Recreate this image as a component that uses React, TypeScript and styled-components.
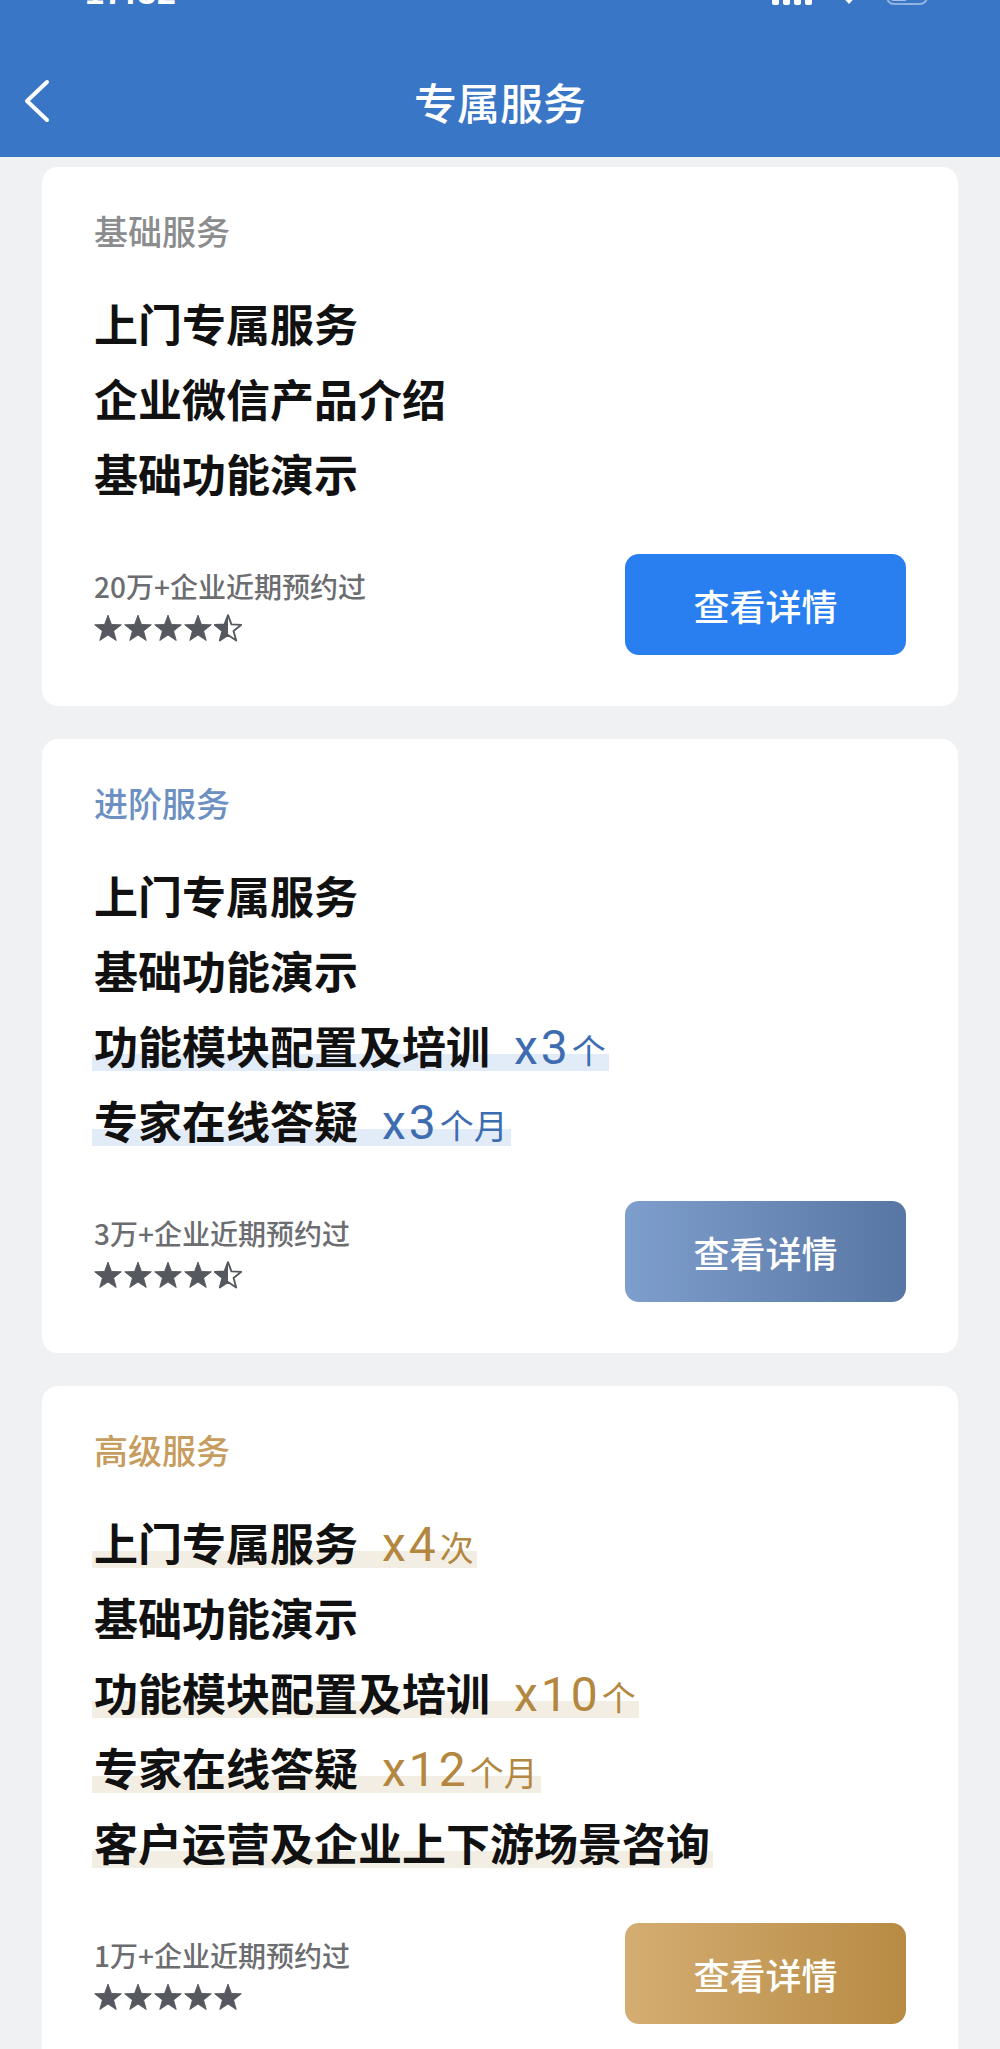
import React, { useId } from "react";
import styled, { createGlobalStyle } from "styled-components";

const GlobalStyle = createGlobalStyle`
  html, body { margin: 0; padding: 0; background: #f0f1f3; }
  body {
    font-family: "Noto Sans CJK SC", "Noto Sans", sans-serif;
    -webkit-font-smoothing: antialiased;
  }
  * { box-sizing: border-box; }
`;

type Tier = "basic" | "advanced" | "premium";

const palette: Record<Tier, { title: string; suffix: string; band: string; button: string }> = {
  basic: { title: "#8b8c8e", suffix: "#3d6db3", band: "", button: "#2a7ff0" },
  advanced: {
    title: "#6d90c2",
    suffix: "#3e6cb0",
    band: "#e2ebf8",
    button: "linear-gradient(90deg, #7e9ecd 0%, #5876a3 100%)",
  },
  premium: {
    title: "#c79d5f",
    suffix: "#b3873f",
    band: "#f3eee4",
    button: "linear-gradient(90deg, #d4ad72 0%, #b88b44 100%)",
  },
};

const Page = styled.div`
  min-height: 2049px;
  background: #f0f1f3;
`;

const Header = styled.header`
  background: #3a76c6;
  height: 157px;
  display: flex;
  flex-direction: column;
`;

const StatusBar = styled.div`
  height: 57px;
  overflow: hidden;
  display: flex;
  justify-content: space-between;
  align-items: flex-start;
  padding: 0 68px 0 85px;
  color: #fff;
`;

const StatusTime = styled.span`
  font-family: "Liberation Sans", Arial, sans-serif;
  font-weight: 700;
  font-size: 34px;
  line-height: 34px;
  margin-top: -25px;
  letter-spacing: 1px;
`;

const StatusIcons = styled.div`
  display: flex;
  align-items: flex-end;
  gap: 20px;
  margin-top: -23px;
  height: 28px;
`;

const NavBar = styled.div`
  height: 88px;
  display: grid;
  grid-template-columns: 1fr auto 1fr;
  align-items: center;
`;

const BackButton = styled.button`
  justify-self: start;
  margin-left: 22px;
  background: none;
  border: none;
  padding: 0;
  display: flex;
  cursor: pointer;
`;

const NavTitle = styled.h1`
  margin: 0;
  color: #fff;
  font-size: 43px;
  font-weight: 500;
  line-height: 60px;
`;

const Main = styled.main`
  display: flex;
  flex-direction: column;
  gap: 33px;
  padding: 10px 42px 0;
`;

const Card = styled.section`
  background: #fff;
  border-radius: 16px;
  padding: 44px 52px 51px;
  display: flex;
  flex-direction: column;
`;

const TierTitle = styled.h2<{ $tier: Tier }>`
  margin: 0;
  font-size: 34px;
  line-height: 40px;
  font-weight: 500;
  color: ${(p) => palette[p.$tier].title};
`;

const ItemList = styled.div`
  margin-top: 46px;
  display: flex;
  flex-direction: column;
  align-items: flex-start;
  gap: 23px;
`;

const Item = styled.div<{ $band: string }>`
  display: inline-flex;
  align-items: baseline;
  height: 52px;
  line-height: 52px;
  font-size: 44px;
  font-weight: 600;
  color: #111;
  margin-left: -2px;
  padding: 0 3px 0 2px;
  white-space: nowrap;
  background: ${(p) =>
    p.$band ? `linear-gradient(to bottom, transparent 67%, ${p.$band} 67%)` : "none"};
`;

const Suffix = styled.span<{ $tier: Tier }>`
  margin-left: 24px;
  color: ${(p) => palette[p.$tier].suffix};
  font-weight: 400;
  display: inline-flex;
  align-items: baseline;
`;

const SuffixCount = styled.span`
  font-family: Roboto, "Liberation Sans", sans-serif;
  font-size: 48px;
  letter-spacing: 3px;
`;

const SuffixUnit = styled.span`
  font-size: 34px;
  margin-left: 1px;
`;

const Footer = styled.div`
  margin-top: 55px;
  display: flex;
  justify-content: space-between;
  align-items: flex-start;
`;

const Meta = styled.div`
  padding-top: 14px;
  display: flex;
  flex-direction: column;
  gap: 10px;
`;

const Booked = styled.span`
  font-size: 28px;
  line-height: 36px;
  font-weight: 500;
  color: #6c6d70;
`;

const Stars = styled.div`
  display: flex;
  gap: 2px;
  height: 28px;
  align-items: center;
`;

const DetailButton = styled.button<{ $tier: Tier }>`
  width: 281px;
  height: 101px;
  border: none;
  border-radius: 14px;
  background: ${(p) => palette[p.$tier].button};
  color: #fff;
  font-family: "Noto Sans CJK SC", sans-serif;
  font-size: 36px;
  font-weight: 500;
  cursor: pointer;
  display: flex;
  align-items: center;
  justify-content: center;
`;

const STAR_PATH =
  "M12 1 L14.94 8.95 L23.41 9.29 L16.76 14.55 L19.05 22.71 L12 18 L4.95 22.71 L7.24 14.55 L0.59 9.29 L9.06 8.95 Z";

const STAR_COLOR = "#55585e";

function Star({ half }: { half?: boolean }) {
  const id = useId().replace(/:/g, "");
  return (
    <svg width="28" height="28" viewBox="0 0 24 24">
      {half ? (
        <>
          <defs>
            <clipPath id={`l${id}`}>
              <rect x="0" y="0" width="12" height="24" />
            </clipPath>
          </defs>
          <path d={STAR_PATH} fill="none" stroke={STAR_COLOR} strokeWidth="1.6" strokeLinejoin="round" />
          <path d={STAR_PATH} fill={STAR_COLOR} clipPath={`url(#l${id})`} />
        </>
      ) : (
        <path d={STAR_PATH} fill={STAR_COLOR} stroke={STAR_COLOR} strokeWidth="0.8" strokeLinejoin="round" />
      )}
    </svg>
  );
}

type ItemData = { text: string; count?: string; unit?: string };

type CardData = {
  tier: Tier;
  title: string;
  items: ItemData[];
  booked: string;
  halfStar: boolean;
};

const cards: CardData[] = [
  {
    tier: "basic",
    title: "基础服务",
    items: [{ text: "上门专属服务" }, { text: "企业微信产品介绍" }, { text: "基础功能演示" }],
    booked: "20万+企业近期预约过",
    halfStar: true,
  },
  {
    tier: "advanced",
    title: "进阶服务",
    items: [
      { text: "上门专属服务" },
      { text: "基础功能演示" },
      { text: "功能模块配置及培训", count: "x3", unit: "个" },
      { text: "专家在线答疑", count: "x3", unit: "个月" },
    ],
    booked: "3万+企业近期预约过",
    halfStar: true,
  },
  {
    tier: "premium",
    title: "高级服务",
    items: [
      { text: "上门专属服务", count: "x4", unit: "次" },
      { text: "基础功能演示" },
      { text: "功能模块配置及培训", count: "x10", unit: "个" },
      { text: "专家在线答疑", count: "x12", unit: "个月" },
      { text: "客户运营及企业上下游场景咨询" },
    ],
    booked: "1万+企业近期预约过",
    halfStar: false,
  },
];

function ServiceCard({ data }: { data: CardData }) {
  const band = palette[data.tier].band;
  return (
    <Card>
      <TierTitle $tier={data.tier}>{data.title}</TierTitle>
      <ItemList>
        {data.items.map((it, i) => {
          const highlighted = data.tier === "premium" ? i !== 1 : Boolean(it.count);
          return (
            <Item key={i} $band={highlighted ? band : ""}>
              {it.text}
              {it.count && (
                <Suffix $tier={data.tier}>
                  <SuffixCount>{it.count}</SuffixCount>
                  <SuffixUnit>{it.unit}</SuffixUnit>
                </Suffix>
              )}
            </Item>
          );
        })}
      </ItemList>
      <Footer>
        <Meta>
          <Booked>{data.booked}</Booked>
          <Stars>
            {[0, 1, 2, 3].map((k) => (
              <Star key={k} />
            ))}
            <Star half={data.halfStar} />
          </Stars>
        </Meta>
        <DetailButton $tier={data.tier}>查看详情</DetailButton>
      </Footer>
    </Card>
  );
}

export default function App() {
  return (
    <>
      <GlobalStyle />
      <Page>
        <Header>
          <StatusBar>
            <StatusTime>17:32</StatusTime>
            <StatusIcons>
              <svg width="40" height="28" viewBox="0 0 40 28">
                <rect x="0" y="18" width="7" height="10" rx="2" fill="#fff" />
                <rect x="11" y="12" width="7" height="16" rx="2" fill="#fff" />
                <rect x="22" y="6" width="7" height="22" rx="2" fill="#fff" />
                <rect x="33" y="0" width="7" height="28" rx="2" fill="#fff" />
              </svg>
              <svg width="34" height="28" viewBox="0 0 34 28">
                <path d="M17 27l-5-5.5a7 7 0 0110 0z" fill="#fff" />
              </svg>
              <svg width="46" height="28" viewBox="0 0 46 28">
                <rect x="1" y="1" width="40" height="26" rx="7" fill="none" stroke="rgba(255,255,255,0.45)" strokeWidth="2" />
                <rect x="4" y="4" width="18" height="20" rx="4" fill="rgba(255,255,255,0.55)" />
                <rect x="42" y="9" width="4" height="10" rx="2" fill="rgba(255,255,255,0.45)" />
              </svg>
            </StatusIcons>
          </StatusBar>
          <NavBar>
            <BackButton aria-label="返回">
              <svg width="30" height="44" viewBox="0 0 30 44">
                <polyline
                  points="25,3 5,22 25,41"
                  fill="none"
                  stroke="#fff"
                  strokeWidth="4"
                  strokeLinecap="round"
                  strokeLinejoin="round"
                />
              </svg>
            </BackButton>
            <NavTitle>专属服务</NavTitle>
            <span />
          </NavBar>
        </Header>
        <Main>
          {cards.map((c) => (
            <ServiceCard key={c.tier} data={c} />
          ))}
        </Main>
      </Page>
    </>
  );
}
